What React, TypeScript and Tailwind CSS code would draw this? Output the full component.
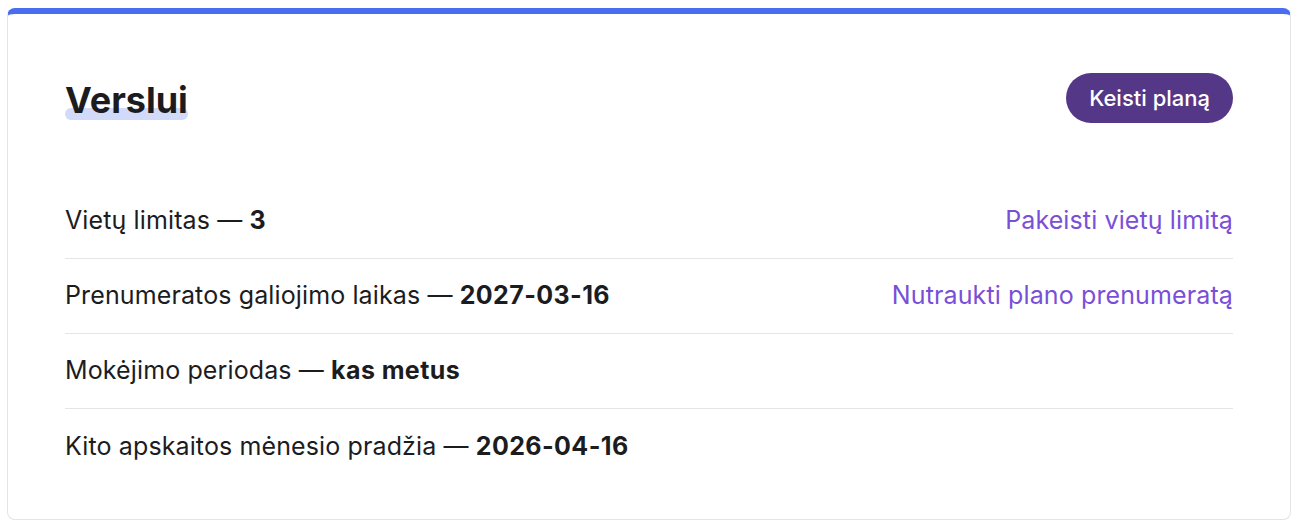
const rows = [
  { label: 'Vietų limitas', value: '3', action: 'Pakeisti vietų limitą' },
  { label: 'Prenumeratos galiojimo laikas', value: '2027-03-16', action: 'Nutraukti plano prenumeratą' },
  { label: 'Mokėjimo periodas', value: 'kas metus' },
  { label: 'Kito apskaitos mėnesio pradžia', value: '2026-04-16' },
]

export default function App() {
  return (
    <main className="min-h-screen bg-white pl-[7px] pr-[11px] pt-2 font-['Inter',sans-serif] text-[#1c1c1f]">
      <section className="h-[512px] rounded-lg border border-[#e3e3e8] border-t-[6px] border-t-[#4a6cf1] px-[57px] pt-[59px]">
        <div className="flex h-[50px] items-center justify-between">
          <h1 className="relative pt-[4px] text-[36px] font-bold leading-none">
            <span className="absolute bottom-[-2px] left-0 right-0 h-[12px] rounded-full bg-[#d1daf9]" />
            <span className="relative">Verslui</span>
          </h1>
          <button
            type="button"
            className="h-[50px] rounded-full bg-[#553787] px-[23px] text-[22px] font-medium text-white"
          >
            Keisti planą
          </button>
        </div>

        <div className="mt-[61px]">
          {rows.map((row, i) => (
            <div
              key={row.label}
              className={`flex h-[75px] items-center justify-between text-[25px] tracking-[0.12px] ${
                i < rows.length - 1 ? 'border-b border-[#e4e4e9]' : ''
              }`}
            >
              <p>
                {row.label} — <span className="font-bold tracking-[0.4px]">{row.value}</span>
              </p>
              {row.action && (
                <button type="button" className="text-[25px] tracking-[0.12px] text-[#7a4fd8]">
                  {row.action}
                </button>
              )}
            </div>
          ))}
        </div>
      </section>
    </main>
  )
}
